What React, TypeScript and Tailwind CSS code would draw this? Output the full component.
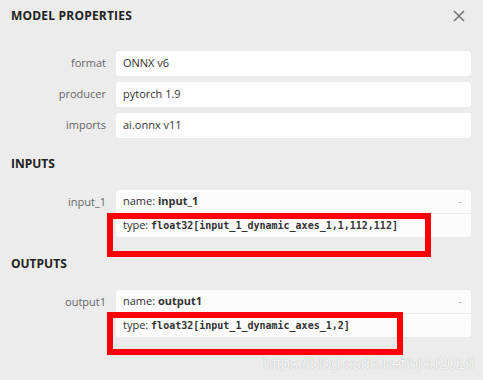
import React from 'react'

const sans = { fontFamily: '"Open Sans", "Noto Sans", sans-serif' }

function PropRow({ label, value }: { label: string; value: string }) {
  return (
    <div className="flex items-center h-[25px]">
      <div className="w-[116px] pr-[10px] text-right text-[11px] text-[#666]">{label}</div>
      <div className="flex-1 h-full bg-white rounded-[3px] flex items-center px-[7px] text-[11px] text-[#333]">
        {value}
      </div>
    </div>
  )
}

function ArgCard({ label, name, type }: { label: string; name: string; type: string }) {
  return (
    <div className="flex">
      <div className="w-[116px] pr-[10px] h-[24px] flex items-center justify-end text-[11px] text-[#666]">{label}</div>
      <div className="flex-1 bg-[#fcfcfc] rounded-[3px]">
        <div className="h-[24px] flex items-center justify-between px-[7px] border-b border-[#ececec] text-[11px] text-[#333]">
          <span>
            name: <b className="font-bold">{name}</b>
          </span>
          <span className="text-[#aaa] text-[10px] pr-[2px]">-</span>
        </div>
        <div className="h-[23px] flex items-center px-[7px] text-[11px] text-[#333]">
          type:&nbsp;
          <code className="text-[10px] font-bold" style={{ fontFamily: '"DejaVu Sans Mono", monospace' }}>
            {type}
          </code>
        </div>
      </div>
    </div>
  )
}

export default function App() {
  return (
    <div className="relative w-[483px] h-[380px] overflow-hidden bg-[#ececec] pt-[9px] pl-[11px] pr-[12px]" style={sans}>
      {/* header */}
      <div className="flex items-center justify-between h-[14px]">
        <h1 className="text-[12px] font-bold text-[#222] leading-[14px] tracking-[0.2px]">MODEL PROPERTIES</h1>
        <svg width="12" height="12" viewBox="0 0 12 12" className="mr-[6px]">
          <path d="M1 1L11 11M11 1L1 11" stroke="#777" strokeWidth="1.6" />
        </svg>
      </div>

      <div className="-ml-[11px] mt-[28px] flex flex-col gap-[6px]">
        <PropRow label="format" value="ONNX v6" />
        <PropRow label="producer" value="pytorch 1.9" />
        <PropRow label="imports" value="ai.onnx v11" />
      </div>

      <h2 className="mt-[19px] text-[12px] font-bold text-[#222] leading-[14px]">INPUTS</h2>
      <div className="-ml-[11px] mt-[19px]">
        <ArgCard label="input_1" name="input_1" type="float32[input_1_dynamic_axes_1,1,112,112]" />
      </div>

      <h2 className="mt-[20px] text-[12px] font-bold text-[#222] leading-[14px]">OUTPUTS</h2>
      <div className="-ml-[11px] mt-[19px]">
        <ArgCard label="output1" name="output1" type="float32[input_1_dynamic_axes_1,2]" />
      </div>

      {/* annotation boxes */}
      <div className="absolute left-[107px] top-[213px] w-[324px] h-[44px] border-[6px] border-[#ff0000]" />
      <div className="absolute left-[107px] top-[312px] w-[296px] h-[43px] border-[6px] border-[#ff0000]" />

      {/* watermark */}
      <div
        className="absolute left-[263px] top-[351px] text-[17px] text-white/85 tracking-[-0.5px]"
        style={{ fontFamily: '"Liberation Sans", Arial, sans-serif', textShadow: '0 0 1px rgba(0,0,0,0.3)' }}
      >
        https://blog.csdn.net/hjxu2016
      </div>
    </div>
  )
}
